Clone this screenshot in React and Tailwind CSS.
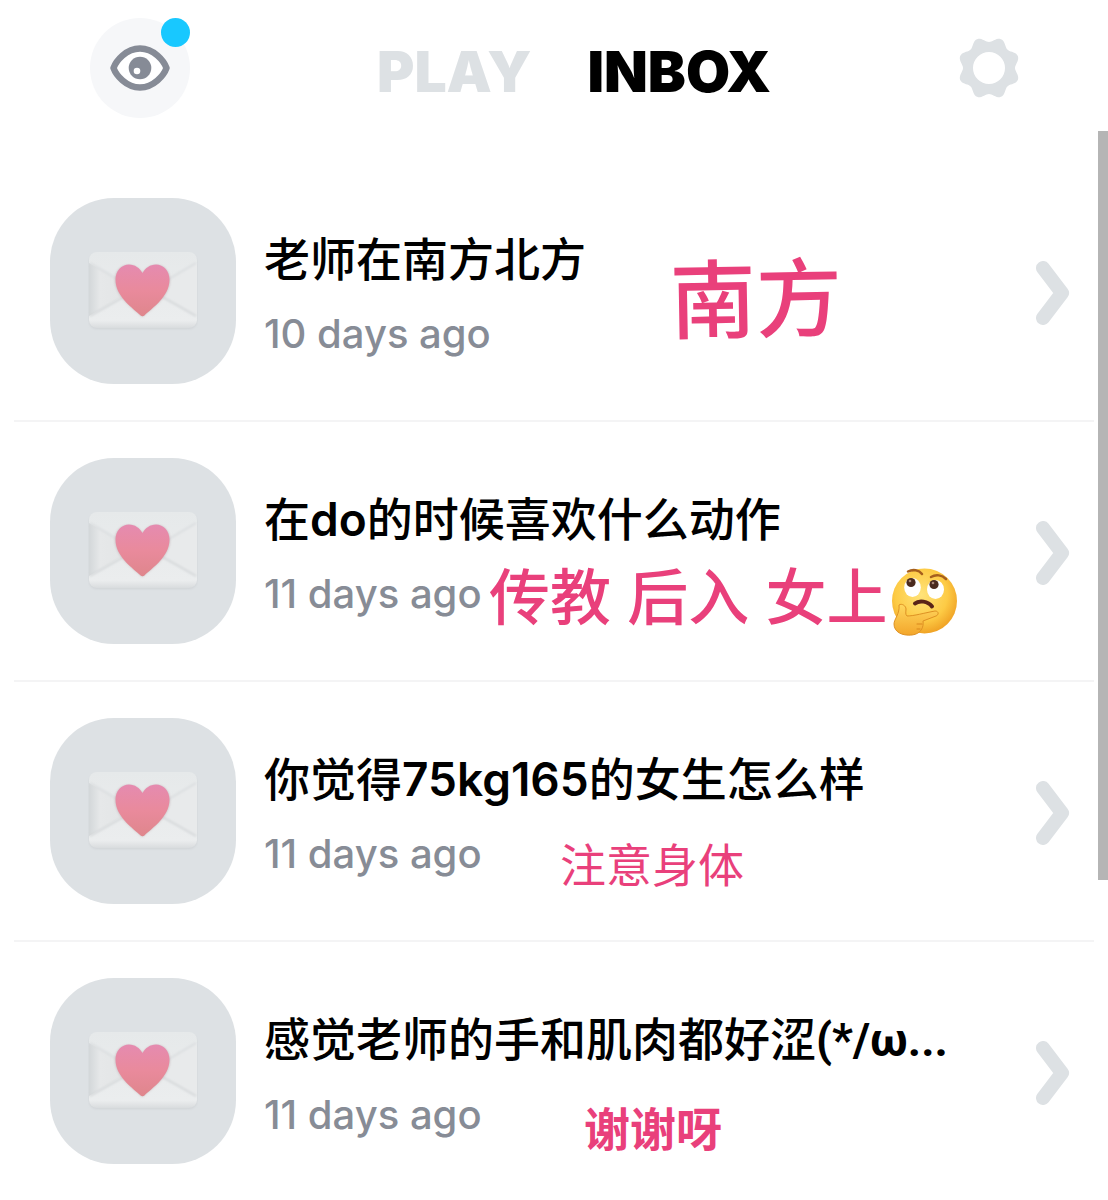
import { useState } from 'react';

const messages = [
  {
    id: 1,
    title: ['老师在南方北方'],
    time: '10 days ago',
    note: '南方',
    noteClass: 'left-[670px] top-[84px] text-[86px] leading-[108px] font-medium -rotate-1',
  },
  {
    id: 2,
    title: ['在', 'do', '的时候喜欢什么动作'],
    time: '11 days ago',
    note: '传教 后入 女上',
    emoji: true,
    noteClass: 'left-[489px] top-[136px] text-[61px] leading-[80px] font-medium gap-0.5',
  },
  {
    id: 3,
    title: ['你觉得', '75kg165', '的女生怎么样'],
    time: '11 days ago',
    note: '注意身体',
    noteClass: 'left-[560px] top-[151px] text-[46px] leading-[64px] font-normal',
  },
  {
    id: 4,
    title: ['感觉老师的手和肌肉都好涩'],
    face: '(*/ω...',
    time: '11 days ago',
    note: '谢谢呀',
    noteClass: 'left-[584px] top-[155px] text-[46px] leading-[64px] font-semibold',
  },
];

function EyeIcon() {
  return (
    <svg viewBox="0 0 60 46" className="w-[60px] h-[46px]" aria-hidden="true">
      <path
        d="M3.500 23C6 16 16 3.500 30 3.500S54 16 56.500 23C54 30 44 42.500 30 42.500S6 30 3.500 23Z"
        fill="#fff"
        stroke="#868b96"
        strokeWidth="6.500"
        strokeLinejoin="round"
      />
      <circle cx="30" cy="23" r="11.300" fill="#868b96" />
      <circle cx="27" cy="26" r="3.300" fill="#fff" />
    </svg>
  );
}

function GearIcon() {
  const points = [];
  for (let i = 0; i < 144; i += 1) {
    const a = (i / 144) * Math.PI * 2;
    const r = 28.6 - 2.6 * Math.cos(a * 8);
    points.push(`${(31 + r * Math.cos(a)).toFixed(2)} ${(31 + r * Math.sin(a)).toFixed(2)}`);
  }
  return (
    <svg viewBox="0 0 62 62" className="w-[62px] h-[62px]" aria-hidden="true">
      <path
        d={`M${points.join('L')}ZM15 31a16 16 0 1 0 32 0a16 16 0 1 0 -32 0Z`}
        fill="#dde1e4"
        fillRule="evenodd"
      />
    </svg>
  );
}

function EnvelopeIcon({ id }) {
  const heart = `heart-${id}`;
  const paper = `paper-${id}`;
  const shade = `shade-${id}`;
  const soft = `soft-${id}`;
  return (
    <svg viewBox="0 0 110 80" className="w-[110px] h-[80px]" aria-hidden="true">
      <defs>
        <linearGradient id={heart} x1="0" y1="0" x2="0" y2="1">
          <stop offset="0" stopColor="#e58bb0" />
          <stop offset="0.5" stopColor="#e98a9c" />
          <stop offset="1" stopColor="#df868c" />
        </linearGradient>
        <linearGradient id={paper} x1="0" y1="0" x2="0" y2="1">
          <stop offset="0" stopColor="#e6e9ea" />
          <stop offset="0.9" stopColor="#ebedee" />
          <stop offset="1" stopColor="#d9dcde" />
        </linearGradient>
        <linearGradient id={shade} x1="0" y1="0" x2="1" y2="0">
          <stop offset="0" stopColor="#d3d7d9" />
          <stop offset="0.25" stopColor="#e6e8e9" />
          <stop offset="1" stopColor="#e2e4e5" />
        </linearGradient>
        <filter id={soft} x="-20%" y="-20%" width="140%" height="140%">
          <feGaussianBlur stdDeviation="1" />
        </filter>
      </defs>
      <rect x="1" y="3" width="108" height="75" rx="8" fill="#cfd3d6" filter={`url(#${soft})`} />
      <rect x="1" y="1" width="108" height="76" rx="8" fill={`url(#${paper})`} />
      <path d="M1 12L46 38L1 65Z" fill={`url(#${shade})`} />
      <path d="M109 12L64 38L109 65Z" fill="#e8eaeb" />
      <path d="M2 12L46 38M108 12L64 38" stroke="#dadddf" strokeWidth="2" fill="none" filter={`url(#${soft})`} />
      <path d="M2 65L46 40M108 65L64 40" stroke="#d3d6d8" strokeWidth="2" fill="none" filter={`url(#${soft})`} />
      <path
        d="M54.500 66C46 58 27 46 27 29C27 20 33 14 40.500 14C47 14 51 17 54.500 22C58 17 62 14 68.500 14C76 14 82 20 82 29C82 46 63 58 54.500 66Z"
        fill="#b9a5aa"
        opacity="0.6"
        filter={`url(#${soft})`}
      />
      <path
        d="M56.400 64.500C55.200 65.500 53.800 65.500 52.600 64.500C45 57 27.500 46 27.500 28.500C27.500 20 33.500 13.500 41 13.500C47 13.500 51.500 17 54.500 22C57.500 17 62 13.500 68 13.500C75.500 13.500 81.500 20 81.500 28.500C81.500 46 64 57 56.400 64.500Z"
        fill={`url(#${heart})`}
      />
    </svg>
  );
}

function ThinkingFace() {
  return (
    <svg viewBox="0 0 68 70" className="w-[68px] h-[70px] mt-2" role="img" aria-label="thinking face">
      <defs>
        <radialGradient id="face" cx="0.45" cy="0.4" r="0.62">
          <stop offset="0" stopColor="#ffe37a" />
          <stop offset="0.65" stopColor="#fdcb45" />
          <stop offset="1" stopColor="#efa023" />
        </radialGradient>
        <linearGradient id="hand" x1="0" y1="0" x2="0" y2="1">
          <stop offset="0" stopColor="#ffd75e" />
          <stop offset="1" stopColor="#f3a62b" />
        </linearGradient>
      </defs>
      <circle cx="34.500" cy="34" r="32.500" fill="url(#face)" />
      <path d="M18 4.500C23 2 29 3 32 7" stroke="#a65f1d" strokeWidth="2.500" strokeLinecap="round" fill="none" />
      <path d="M41 10C46 7 52 8 56 12" stroke="#a65f1d" strokeWidth="2.500" strokeLinecap="round" fill="none" />
      <ellipse cx="22.500" cy="20.500" rx="8.300" ry="9.500" fill="#fff" />
      <ellipse cx="45.500" cy="22.500" rx="8.500" ry="9.500" fill="#fff" />
      <circle cx="21" cy="15.500" r="4.600" fill="#4a2a1e" />
      <circle cx="44" cy="17.500" r="4.600" fill="#4a2a1e" />
      <circle cx="20" cy="14" r="1.300" fill="#a98778" />
      <circle cx="43" cy="16" r="1.300" fill="#a98778" />
      <path d="M25 36.500C29 33 38 34 42 39.500" stroke="#5a2418" strokeWidth="4" strokeLinecap="round" fill="none" />
      <path
        d="M9 38C12 36 16 39 16 42C16 45 15 47 17 49C24 49 34 46 45 44C49 44 49 48 46 49L33 54C34 60 31 67 22 68C12 69 4 65 4 57C4 52 10 47 9 38Z"
        fill="url(#hand)"
        stroke="#de9123"
        strokeWidth="1"
        strokeLinejoin="round"
      />
      <path d="M27 57H32M27 62H30" stroke="#d9871c" strokeWidth="1" strokeLinecap="round" />
    </svg>
  );
}

function Chevron() {
  return (
    <svg viewBox="0 0 34 64" className="w-[34px] h-[64px] shrink-0 mt-1" aria-hidden="true">
      <path
        d="M7 7L26 32L7 57"
        fill="none"
        stroke="#dde1e4"
        strokeWidth="14"
        strokeLinecap="round"
        strokeLinejoin="round"
      />
    </svg>
  );
}

function Header({ tab, onTab }) {
  const tabClass = (name) => (tab === name ? 'text-black' : 'text-[#dde1e4]');
  return (
    <header className="flex items-center justify-between pl-[90px] pr-[88px] pt-[18px] pb-3">
      <button
        type="button"
        aria-label="Viewers"
        className="relative w-[100px] h-[100px] rounded-full bg-[#f6f7f9] flex items-center justify-center"
      >
        <EyeIcon />
        <span className="absolute right-0 top-0 w-[29px] h-[29px] rounded-full bg-[#18c8ff]" />
      </button>
      <nav className="flex gap-14 text-[57px] leading-[72px] pt-2 font-black">
        <button type="button" onClick={() => onTab('play')} className={tabClass('play')}>
          PLAY
        </button>
        <button type="button" onClick={() => onTab('inbox')} className={tabClass('inbox')}>
          INBOX
        </button>
      </nav>
      <button type="button" aria-label="Settings">
        <GearIcon />
      </button>
    </header>
  );
}

function MessageRow({ message }) {
  return (
    <li className="relative border-b-2 border-[#f4f4f5] last:border-b-0">
      <a href={`#message-${message.id}`} className="flex items-center py-9 pl-9 pr-6">
        <span className="w-[186px] h-[186px] shrink-0 rounded-[64px] bg-[#dde1e4] flex items-center justify-center">
          <EnvelopeIcon id={message.id} />
        </span>
        <span className="flex-1 min-w-0 pl-7 pt-2.5">
          <span className="block truncate text-[46px] leading-[76px] font-medium text-black">
            {message.title.map((part, i) => (
              <span key={part} className={i === 1 ? 'font-semibold' : ''}>
                {part}
              </span>
            ))}
            {message.face && <span className="font-bold font-[Roboto,sans-serif]">{message.face}</span>}
          </span>
          <span className="block text-[40px] leading-[74px] font-medium text-[#878c96]">
            {message.time}
          </span>
        </span>
        <Chevron />
      </a>
      <span
        className={`absolute -ml-[14px] flex items-center whitespace-nowrap pointer-events-none text-[#e9407b] ${message.noteClass}`}
      >
        {message.note}
        {message.emoji && <ThinkingFace />}
      </span>
    </li>
  );
}

export default function App() {
  const [tab, setTab] = useState('inbox');
  return (
    <div className="relative min-h-screen bg-white overflow-hidden font-[Inter,'Noto_Sans_CJK_SC',sans-serif]">
      <Header tab={tab} onTab={setTab} />
      <main className="pt-8 px-[14px]">
        <ul>
          {messages.map((m) => (
            <MessageRow key={m.id} message={m} />
          ))}
        </ul>
      </main>
      <div className="absolute right-0 top-[131px] w-[10px] h-[749px] bg-[#b5b5b5]" aria-hidden="true" />
    </div>
  );
}
